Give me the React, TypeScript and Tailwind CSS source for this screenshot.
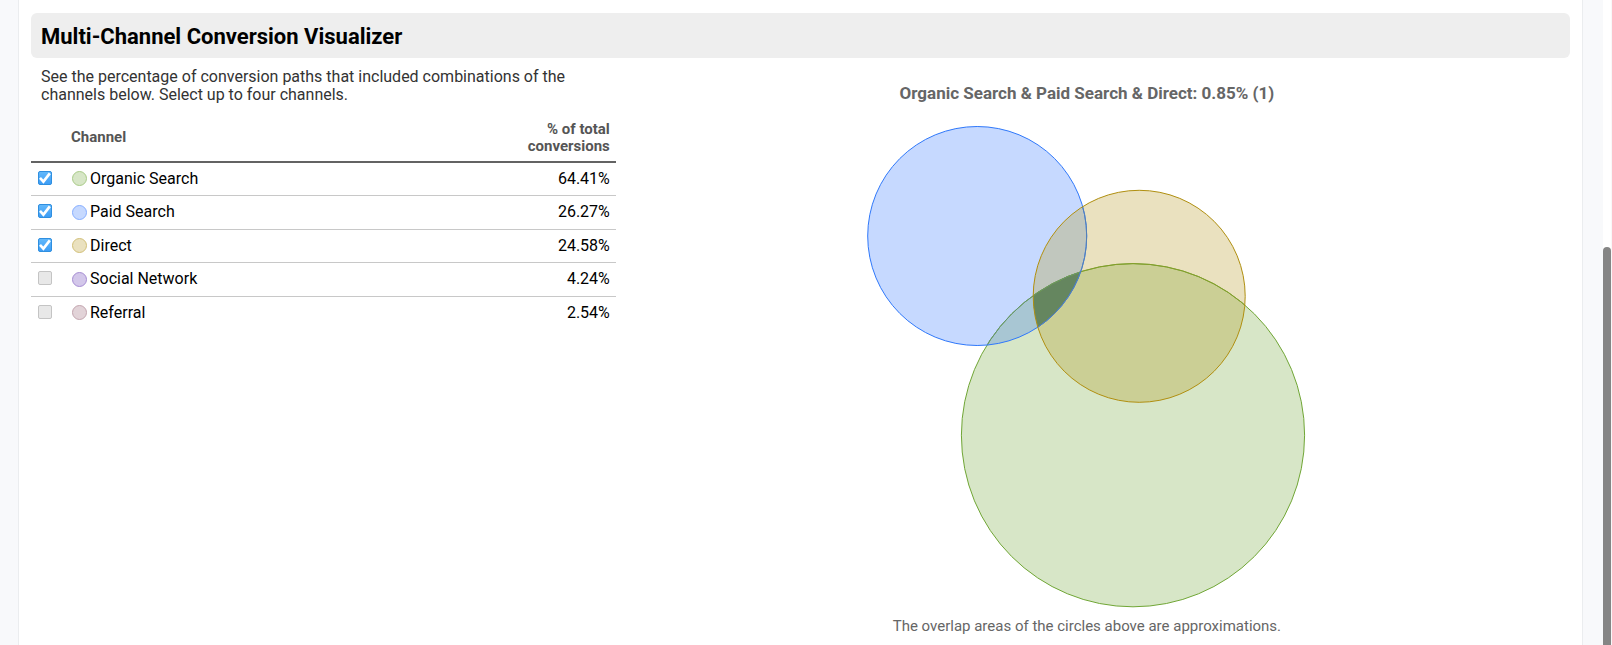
import { useState } from "react";

type Channel = {
  id: string;
  name: string;
  share: string;
  swatch: string;
};

const channels: Channel[] = [
  { id: "organic", name: "Organic Search", share: "64.41%", swatch: "bg-[#d7e6c7] border-[#a9cb88]" },
  { id: "paid", name: "Paid Search", share: "26.27%", swatch: "bg-[#c6d9ff] border-[#86aeff]" },
  { id: "direct", name: "Direct", share: "24.58%", swatch: "bg-[#eae1bf] border-[#d2c078]" },
  { id: "social", name: "Social Network", share: "4.24%", swatch: "bg-[#d3c7ea] border-[#a68dd3]" },
  { id: "referral", name: "Referral", share: "2.54%", swatch: "bg-[#e2d3d8] border-[#c3a5af]" },
];

function ChannelCheckbox({ id, checked, onChange }: { id: string; checked: boolean; onChange: () => void }) {
  return (
    <span className="relative block size-3.5">
      <input
        id={id}
        type="checkbox"
        checked={checked}
        onChange={onChange}
        className="peer block size-3.5 appearance-none rounded-[2px] border border-[#c4c4c4] bg-[#e8e8e8] checked:border-[#2f8fe0] checked:bg-linear-to-b checked:from-[#62b8fb] checked:to-[#3d9df5]"
      />
      <svg
        viewBox="0 0 14 14"
        aria-hidden="true"
        className="pointer-events-none absolute inset-0 hidden size-3.5 peer-checked:block"
      >
        <path d="M2 6.8 L5.4 10.6 L11.8 2.4" fill="none" stroke="#fff" strokeWidth="2.6" />
      </svg>
    </span>
  );
}

function ChannelTable() {
  const [selected, setSelected] = useState<string[]>(["organic", "paid", "direct"]);

  const toggle = (id: string) =>
    setSelected((current) => {
      if (current.includes(id)) return current.filter((item) => item !== id);
      return current.length < 4 ? [...current, id] : current;
    });

  return (
    <table className="mt-2.5 w-full table-fixed border-collapse">
      <thead>
        <tr className="h-12 border-b-2 border-[#636363] text-[15px] leading-[17px] text-[#555]">
          <th className="w-10" aria-label="Selected" />
          <th className="text-left font-bold">Channel</th>
          <th className="w-28 pr-1.5 text-right font-bold">% of total conversions</th>
        </tr>
      </thead>
      <tbody>
        {channels.map((channel) => (
          <tr
            key={channel.id}
            className="h-[33px] border-b border-[#c8c8c8] text-base leading-5 text-black last:border-b-0 even:h-[34px]"
          >
            <td className="pb-0.5 pl-[7px]">
              <ChannelCheckbox
                id={channel.id}
                checked={selected.includes(channel.id)}
                onChange={() => toggle(channel.id)}
              />
            </td>
            <td>
              <label htmlFor={channel.id} className="flex items-center gap-[3px] pl-px">
                <span className={`size-[15px] rounded-full border ${channel.swatch}`} />
                {channel.name}
              </label>
            </td>
            <td className="pr-1.5 text-right">{channel.share}</td>
          </tr>
        ))}
      </tbody>
    </table>
  );
}

function VennDiagram() {
  return (
    <svg
      viewBox="867 125 440 484"
      className="h-[484px] w-[440px] max-w-full"
      role="img"
      aria-label="Overlap of the selected channels"
    >
      <defs>
        <clipPath id="inPaid">
          <circle cx="977.2" cy="236" r="109.5" />
        </clipPath>
        <clipPath id="inDirect">
          <circle cx="1139.2" cy="296.3" r="106" />
        </clipPath>
      </defs>
      <circle cx="1133" cy="435.2" r="171.6" fill="#d7e6c7" />
      <circle cx="977.2" cy="236" r="109.5" fill="#c6d9ff" />
      <circle cx="1139.2" cy="296.3" r="106" fill="#eae1bf" />
      <circle cx="1133" cy="435.2" r="171.6" fill="#cbcf95" clipPath="url(#inDirect)" />
      <circle cx="1139.2" cy="296.3" r="106" fill="#c1c7be" clipPath="url(#inPaid)" />
      <circle cx="1133" cy="435.2" r="171.6" fill="#a8c6d3" clipPath="url(#inPaid)" />
      <g clipPath="url(#inPaid)">
        <circle cx="1133" cy="435.2" r="171.6" fill="#65865f" clipPath="url(#inDirect)" />
      </g>
      <g fill="none">
        <circle cx="1133" cy="435.2" r="171.6" stroke="#70a635" />
        <circle cx="1133" cy="435.2" r="171.6" stroke="#869d2a" clipPath="url(#inDirect)" />
        <circle cx="1133" cy="435.2" r="171.6" stroke="#639373" clipPath="url(#inPaid)" />
        <circle cx="977.2" cy="236" r="109.5" stroke="#2f78fa" />
        <circle cx="977.2" cy="236" r="109.5" stroke="#5580b4" clipPath="url(#inDirect)" />
        <circle cx="1139.2" cy="296.3" r="106" stroke="#b08f10" />
      </g>
    </svg>
  );
}

export default function App() {
  return (
    <div className="flex h-screen overflow-hidden bg-[#f8f9fb] font-[Roboto,sans-serif]">
      <main className="ml-[18px] mr-5 min-w-0 flex-1 border-x border-[#ebedef] bg-white px-3 pt-[13px]">
        <h1 className="rounded-md bg-[#eee] px-2.5 pt-2.5 pb-[7px] text-[22px] leading-7 font-bold text-black">
          Multi-Channel Conversion Visualizer
        </h1>
        <div className="flex">
          <section className="w-[38%] shrink-0 pt-2.5">
            <p className="pr-12 pl-2.5 text-base leading-[18px] text-[#333]">
              See the percentage of conversion paths that included combinations of the channels below. Select up to
              four channels.
            </p>
            <ChannelTable />
          </section>
          <section className="flex min-w-0 flex-1 flex-col items-center pt-6 pr-3">
            <h2 className="text-[17px] leading-[23px] font-bold text-[#666]">
              Organic Search &amp; Paid Search &amp; Direct: 0.85% (1)
            </h2>
            <div className="mt-5">
              <VennDiagram />
            </div>
            <p className="mt-2 text-[15px] leading-[18px] text-[#666]">
              The overlap areas of the circles above are approximations.
            </p>
          </section>
        </div>
      </main>
      <div className="flex w-[9px] flex-col border-r border-[#f8f8f8] bg-white" aria-hidden="true">
        <div className="mt-[247px] w-2 flex-1 rounded-t bg-[#858585]" />
      </div>
    </div>
  );
}
